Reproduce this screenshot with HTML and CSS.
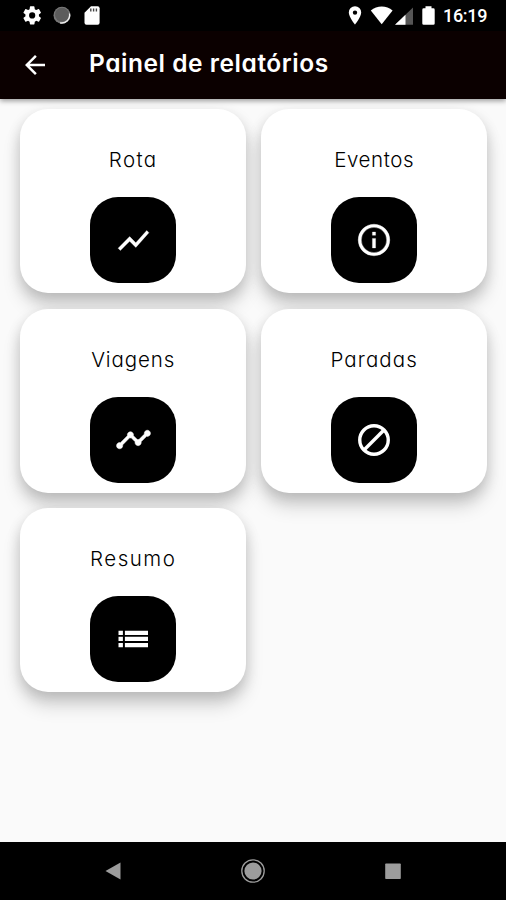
FILE: index.html
```html
<!DOCTYPE html>
<html lang="pt-BR">
<head>
<meta charset="utf-8">
<title>Painel de relatórios</title>
<link rel="stylesheet" href="styles.css">
</head>
<body>
<div class="statusbar">
  <svg class="sys-icons" width="90" height="31" viewBox="0 0 90 31">
    <g transform="translate(-.1 4.1) scale(.94)" fill="#fff"><path d="M19.14 12.94c.04-.3.06-.61.06-.94s-.02-.64-.07-.94l2.03-1.58a.49.49 0 0 0 .12-.61l-1.92-3.32a.49.49 0 0 0-.59-.22l-2.39.96a7 7 0 0 0-1.62-.94L14.4 2.81a.48.48 0 0 0-.48-.41h-3.84a.47.47 0 0 0-.47.41l-.36 2.54a7 7 0 0 0-1.62.94l-2.39-.96a.48.48 0 0 0-.59.22L2.74 8.87a.47.47 0 0 0 .12.61l2.03 1.58a6 6 0 0 0 0 1.88l-2.03 1.58a.49.49 0 0 0-.12.61l1.92 3.32c.12.22.37.29.59.22l2.39-.96a7 7 0 0 0 1.62.94l.36 2.54c.05.24.24.41.48.41h3.84c.24 0 .44-.17.47-.41l.36-2.54a7 7 0 0 0 1.62-.94l2.39.96c.22.08.47 0 .59-.22l1.92-3.32a.47.47 0 0 0-.12-.61zM12 15.3A3.3 3.3 0 1 1 12 8.7a3.3 3.3 0 0 1 0 6.6z"/></g>
    <circle cx="41" cy="15.3" r="8.5" fill="#777"/>
    <circle cx="41" cy="14.8" r="7" fill="#5c5c5c"/>
    <path d="M48.500 13.500a8 8 0 0 1-9.500 9.300" fill="none" stroke="#eee" stroke-width="1.300"/>
    <path d="M70 6.300h6.600a2 2 0 0 1 2 2v14.500a2 2 0 0 1-2 2H65.500a2 2 0 0 1-2-2V12.800z" fill="#fff"/>
    <path d="M69.800 8.500v3M72.600 8.500v3M75.400 8.500v3" stroke="#444" stroke-width="1.400"/>
  </svg>
  <svg class="net-icons" width="92" height="31" viewBox="0 0 92 31">
    <path fill="#fff" fill-rule="evenodd" d="M11 6.200a6.200 6.200 0 0 0-6.200 6.200c0 4.600 6.200 12 6.200 12s6.200-7.400 6.200-12A6.200 6.200 0 0 0 11 6.200zm0 4.200a2.200 2.200 0 1 1 0 4.400 2.200 2.200 0 0 1 0-4.400z"/>
    <path fill="#fff" d="M26.800 10.500C33 5.300 42.500 5.300 48.600 10.500L37.700 24.200z"/>
    <path fill="#555" d="M69 7.500v17.300H51z"/>
    <path fill="#fff" d="M61.500 14.700v10.100H51z"/>
    <path fill="#fff" d="M81.500 6.300h6v2h1.800a1.400 1.400 0 0 1 1.400 1.400v13.700a1.400 1.400 0 0 1-1.400 1.400h-9.600a1.400 1.400 0 0 1-1.400-1.400V9.700a1.400 1.400 0 0 1 1.400-1.400h1.800z"/>
  </svg>
  <span class="clock">16:19</span>
</div>
<header class="appbar">
  <svg class="back" width="30" height="30" viewBox="0 0 24 24"><path fill="#fff" d="M20 11H7.830l5.590-5.590L12 4l-8 8 8 8 1.410-1.410L7.830 13H20z"/></svg>
  <h1 class="title">Painel de relatórios</h1>
</header>
<main class="grid">
  <section class="card">
    <h2 class="label rota">Rota</h2>
    <div class="tile"><svg width="37" height="37" viewBox="0 0 24 24"><path fill="#fff" stroke="#fff" stroke-width=".2" d="M3.500 18.490l6-6.010 4 4L22 6.920l-1.410-1.410-7.090 7.970-4-4L2 16.990z"/></svg></div>
  </section>
  <section class="card">
    <h2 class="label eventos">Eventos</h2>
    <div class="tile"><svg width="38" height="38" viewBox="0 0 24 24"><path fill="#fff" stroke="#fff" stroke-width=".2" d="M11 7h2v2h-2zm0 4h2v6h-2zm1-9a10 10 0 1 0 0 20 10 10 0 0 0 0-20zm0 18a8 8 0 1 1 0-16 8 8 0 0 1 0 16z"/></svg></div>
  </section>
  <section class="card">
    <h2 class="label viagens">Viagens</h2>
    <div class="tile"><svg width="37" height="37" viewBox="0 0 24 24"><path fill="#fff" stroke="#fff" stroke-width=".35" d="M23 8c0 1.100-.9 2-2 2a1.700 1.700 0 0 1-.51-.07l-3.560 3.550c.05.16.07.34.07.52 0 1.100-.9 2-2 2s-2-.9-2-2c0-.18.020-.36.070-.52l-2.550-2.550a1.900 1.900 0 0 1-1.040 0l-4.550 4.560c.05.16.07.33.07.51 0 1.100-.9 2-2 2s-2-.9-2-2 .9-2 2-2c.18 0 .35.020.51.070l4.560-4.550A1.900 1.900 0 0 1 8 9c0-1.100.9-2 2-2s2 .9 2 2c0 .18-.02.36-.07.52l2.550 2.550a1.900 1.900 0 0 1 1.040 0l3.550-3.560A1.700 1.700 0 0 1 19 8c0-1.100.9-2 2-2s2 .9 2 2z"/></svg></div>
  </section>
  <section class="card">
    <h2 class="label paradas">Paradas</h2>
    <div class="tile"><svg width="38" height="38" viewBox="0 0 24 24" fill="none" stroke="#fff" stroke-width="2.150"><circle cx="12" cy="12" r="9"/><path d="M5.700 18.300L18.300 5.700"/></svg></div>
  </section>
  <section class="card">
    <h2 class="label resumo">Resumo</h2>
    <div class="tile"><svg width="38" height="38" viewBox="0 0 38 38" fill="#fff"><path d="M4.500 10.700h4.400v4.300H4.500zM10.900 10.700H34v4.300H10.900zM4.500 16.800h4.400v4.300H4.500zM10.900 16.800H34v4.300H10.900zM4.500 22.900h4.400v4.300H4.500zM10.900 22.900H34v4.300H10.900z"/></svg></div>
  </section>
</main>
<nav class="navbar">
  <svg width="26" height="26" viewBox="0 0 26 26"><path d="M5.500 13L20.500 4.500v17z" fill="#9c9c9c"/></svg>
  <svg width="26" height="26" viewBox="0 0 26 26"><circle cx="13" cy="13" r="11.200" fill="none" stroke="#9c9c9c" stroke-width="1.300"/><circle cx="13" cy="13" r="8.600" fill="#9c9c9c"/></svg>
  <svg width="26" height="26" viewBox="0 0 26 26"><rect x="5.200" y="5.500" width="15.600" height="15.600" rx=".8" fill="#9c9c9c"/></svg>
</nav>
</body>
</html>
```
FILE: styles.css
```css
* {
  box-sizing: border-box;
}

body {
  margin: 0;
  height: 900px;
  display: flex;
  flex-direction: column;
  overflow: hidden;
  background: #fafafa;
  font-family: Inter, "Open Sans", sans-serif;
  font-feature-settings: "cv11", "ss03";
}

.statusbar {
  flex: none;
  height: 31px;
  display: flex;
  background: #000;
  color: #fff;
}

.sys-icons {
  margin-left: 21px;
}

.net-icons {
  margin-left: 233px;
}

.clock {
  margin-left: 7px;
  font: 500 18px/32px Roboto, sans-serif;
  letter-spacing: -0.3px;
}

.appbar {
  flex: none;
  height: 68px;
  display: flex;
  align-items: center;
  padding-left: 20px;
  background: #0b0000;
  color: #fff;
  box-shadow: 0 2px 5px rgba(0, 0, 0, 0.38);
}

.title {
  margin: 0 0 5px 39px;
  font-size: 24.500px;
  font-weight: 560;
  line-height: 32px;
  letter-spacing: 0.550px;
  white-space: nowrap;
}

.grid {
  flex: 1;
  display: grid;
  grid-template-columns: 226px 226px;
  grid-auto-rows: 184px;
  gap: 15.400px 15px;
  padding: 10.200px 0 0 20.200px;
}

.card {
  display: flex;
  flex-direction: column;
  align-items: center;
  padding-top: 35px;
  border-radius: 28px;
  background: #fff;
  box-shadow: 0 14px 18px rgba(0, 0, 0, 0.15), 0 5px 14px rgba(0, 0, 0, 0.15);
}

.label {
  margin: 0;
  height: 53px;
  font-size: 20.500px;
  font-weight: 300;
  line-height: 32px;
  color: #000;
}

.rota {
  letter-spacing: 1.400px;
}

.eventos {
  letter-spacing: 0.600px;
}

.viagens {
  letter-spacing: 0.900px;
}

.paradas {
  letter-spacing: 1.100px;
}

.resumo {
  letter-spacing: 1.500px;
}

.tile {
  width: 86px;
  height: 86px;
  display: flex;
  align-items: center;
  justify-content: center;
  border-radius: 28px;
  background: #000;
}

.navbar {
  flex: none;
  height: 58px;
  display: flex;
  justify-content: space-between;
  align-items: center;
  padding: 0 100px;
  background: #000;
}
```
